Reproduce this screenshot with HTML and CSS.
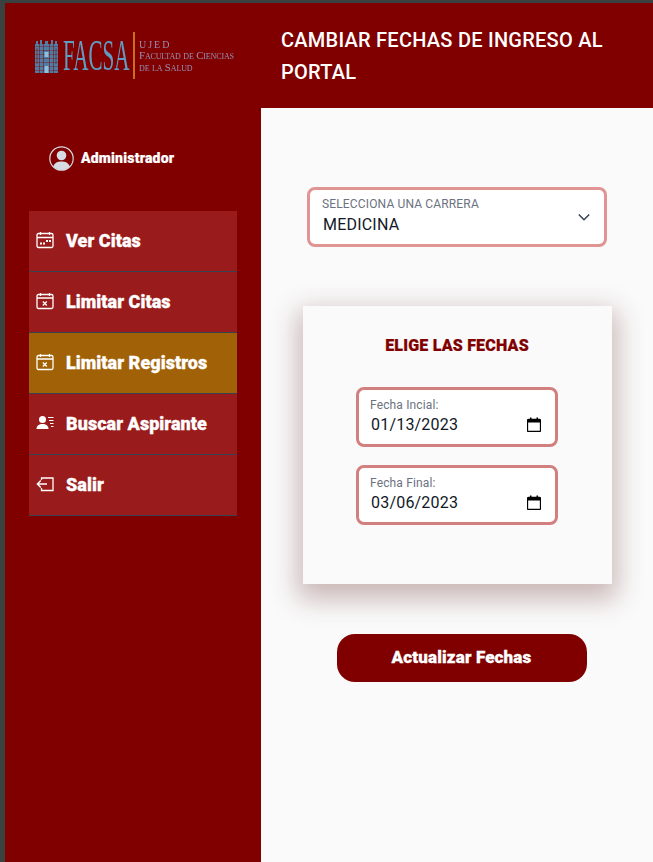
FILE: index.html
```html
<!DOCTYPE html>
<html lang="es">
<head>
<meta charset="utf-8">
<title>Cambiar fechas</title>
<link rel="stylesheet" href="styles.css">
</head>
<body>
<div class="app">
  <aside class="sidebar">
    <div class="logo">
      <svg class="logo-mark" width="23" height="33" viewBox="0 0 23 33">
        <rect x="0" y="4" width="23" height="29" fill="#4f7da3"/>
        <path d="M1 4V1h2v3M5 4V0h2v4M10 4V1h3v3M16 4V0h2v4M20 4V1h2v3" fill="#4f7da3"/>
        <path d="M0 6h23v1H0zM0 10h23v1H0zM0 14h23v1H0zM0 18h23v1H0zM0 22h23v1H0zM0 26h23v1H0zM0 30h23v1H0z" fill="#800000" opacity=".35"/>
        <path d="M4 4h1v29H4zM8 4h1v29H8zM14 4h1v29h-1zM18 4h1v29h-1zM1.500 8h1v16h-1zM20.500 8h1v16h-1z" fill="#800000" opacity=".5"/>
        <path d="M9.500 12h4v5h-4zM9.500 26h4v7h-4z" fill="#8cc0dc"/>
      </svg>
      <span class="logo-name">FACSA</span>
      <span class="logo-bar"></span>
      <div class="logo-text">
        <div class="logo-ujed">UJED</div>
        <div>Facultad de Ciencias</div>
        <div>de la Salud</div>
      </div>
    </div>
    <div class="user">
      <svg width="25" height="25" viewBox="0 0 25 25">
        <circle cx="12.500" cy="12.500" r="11.700" fill="none" stroke="#d7dbe4" stroke-width="1.200"/>
        <circle cx="12.500" cy="9.500" r="4.800" fill="#d7dbe4"/>
        <path d="M4.200 20.500c1.500-3.800 4.500-5 8.300-5s6.800 1.200 8.300 5a11.700 11.700 0 0 1-16.600 0z" fill="#d7dbe4"/>
      </svg>
      <span class="user-name">Administrador</span>
    </div>
    <nav class="menu">
      <a class="item">
        <svg width="18" height="18" viewBox="0 0 18 18" class="ico"><rect x="1" y="2.500" width="16" height="14" rx="1.500" fill="none" stroke="#fff" stroke-width="1.300"/><path d="M4.500 1v3M13.500 1v3M1 6.500h16" stroke="#fff" stroke-width="1.300" fill="none"/><path d="M4 11.500h2v2H4zM7 11.500h2v2H7zM10 9h2v2h-2zM13 9h2v2h-2z" fill="#fff"/></svg>
        <span>Ver Citas</span>
      </a>
      <a class="item">
        <svg width="18" height="18" viewBox="0 0 18 18" class="ico"><rect x="1" y="2.500" width="16" height="14" rx="1.500" fill="none" stroke="#fff" stroke-width="1.300"/><path d="M4.500 1v3M13.500 1v3M1 6h16" stroke="#fff" stroke-width="1.300" fill="none"/><path d="M6.800 9.500l4 4M10.800 9.500l-4 4" stroke="#fff" stroke-width="1.300"/></svg>
        <span>Limitar Citas</span>
      </a>
      <a class="item active">
        <svg width="18" height="18" viewBox="0 0 18 18" class="ico"><rect x="1" y="2.500" width="16" height="14" rx="1.500" fill="none" stroke="#fff" stroke-width="1.300"/><path d="M4.500 1v3M13.500 1v3M1 6h16" stroke="#fff" stroke-width="1.300" fill="none"/><path d="M6.800 9.500l4 4M10.800 9.500l-4 4" stroke="#fff" stroke-width="1.300"/></svg>
        <span>Limitar Registros</span>
      </a>
      <a class="item">
        <svg width="18" height="18" viewBox="0 0 18 18" class="ico"><circle cx="6.500" cy="5.500" r="3.500" fill="#fff"/><path d="M0.500 15c0-3.500 2.500-5 6-5s6 1.500 6 5z" fill="#fff"/><path d="M12 3.500h5.500M13 6.500h4.500M14 9.500h3.500M15 12.500h2.500" stroke="#fff" stroke-width="1.200"/></svg>
        <span>Buscar Aspirante</span>
      </a>
      <a class="item">
        <svg width="18" height="18" viewBox="0 0 18 18" class="ico"><path d="M5.500 5V3h11.500v12.500H5.500V13" fill="none" stroke="#fff" stroke-width="1.300"/><path d="M11 9H1.500M4.800 5.500L1.300 9l3.500 3.500" fill="none" stroke="#fff" stroke-width="1.300"/></svg>
        <span>Salir</span>
      </a>
    </nav>
  </aside>
  <div class="main">
    <header class="topbar">
      <h1>CAMBIAR FECHAS DE INGRESO AL PORTAL</h1>
    </header>
    <main class="content">
      <div class="field field-select">
        <div class="field-body">
          <div class="field-label">SELECCIONA UNA CARRERA</div>
          <div class="field-value">MEDICINA</div>
        </div>
        <svg class="chevron" width="14" height="9" viewBox="0 0 14 9"><path d="M1.800 1.500L7 6.700l5.200-5.200" fill="none" stroke="#374151" stroke-width="1.500"/></svg>
      </div>
      <section class="card">
        <h2>ELIGE LAS FECHAS</h2>
        <div class="field field-date">
          <div class="field-body">
            <div class="field-label">Fecha Incial:</div>
            <div class="field-value">01/13/2023</div>
          </div>
          <svg class="cal" width="14" height="15" viewBox="0 0 14 15"><path d="M1.500 2.500h11a1 1 0 0 1 1 1v10a1 1 0 0 1-1 1h-11a1 1 0 0 1-1-1v-10a1 1 0 0 1 1-1z" fill="none" stroke="#000" stroke-width="1.300"/><path d="M0.500 2.500h13v3h-13zM3 0.500h1.500v2H3zM9.500 0.500H11v2H9.500z" fill="#000"/></svg>
        </div>
        <div class="field field-date">
          <div class="field-body">
            <div class="field-label">Fecha Final:</div>
            <div class="field-value">03/06/2023</div>
          </div>
          <svg class="cal" width="14" height="15" viewBox="0 0 14 15"><path d="M1.500 2.500h11a1 1 0 0 1 1 1v10a1 1 0 0 1-1 1h-11a1 1 0 0 1-1-1v-10a1 1 0 0 1 1-1z" fill="none" stroke="#000" stroke-width="1.300"/><path d="M0.500 2.500h13v3h-13zM3 0.500h1.500v2H3zM9.500 0.500H11v2H9.500z" fill="#000"/></svg>
        </div>
      </section>
      <button class="submit" type="button">Actualizar Fechas</button>
    </main>
  </div>
</div>
</body>
</html>
```

FILE: styles.css
```css
* { box-sizing: border-box; }
html, body { height: 100%; }
body {
  margin: 0;
  padding: 3px 0 0 5px;
  height: 862px;
  overflow: hidden;
  background: #3b4140;
  font-family: Roboto, "Liberation Sans", sans-serif;
}
.app { display: flex; height: 859px; }
.sidebar {
  width: 256px;
  flex: none;
  background: #800000;
  padding: 27px 24px 0;
}
.logo {
  display: flex;
  align-items: center;
  height: 50px;
  margin: 0 -24px 0 6px;
  filter: blur(.3px);
}
.logo-mark { flex: none; margin-top: 2px; }
.logo-name {
  flex: none;
  width: 68px;
  margin-left: 5px;
  font-family: "Liberation Serif", serif;
  font-size: 45px;
  line-height: 1;
  color: #5f9dc4;
  transform: scaleX(.47);
  transform-origin: left center;
}
.logo-bar { flex: none; width: 2px; height: 47px; margin: 0 4px 0 2px; background: #c8701c; }
.logo-text {
  margin-top: 2px;
  font-family: "Liberation Serif", serif;
  font-variant: small-caps;
  font-size: 10.900px;
  letter-spacing: -.15px;
  line-height: 11.500px;
  color: #9690b4;
  white-space: nowrap;
}
.logo-ujed { letter-spacing: 2px; font-size: 10px; }
.user {
  display: flex;
  align-items: center;
  gap: 7px;
  margin: 66px 0 0 20px;
  height: 25px;
  color: #fff;
  font-size: 14px;
  font-weight: 900;
  letter-spacing: .2px;
  -webkit-text-stroke: .2px #fff;
}
.user-name { margin-top: -2px; }
.menu { margin-top: 40px; width: 208px; }
.item {
  display: flex;
  align-items: center;
  height: 61px;
  padding: 0 0 2px 7px;
  gap: 12px;
  background: #991b1b;
  border-bottom: 1px solid #374151;
  color: #fff;
  font-size: 18px;
  font-weight: 900;
  letter-spacing: .05px;
  -webkit-text-stroke: .3px #fff;
}
.item.active { background: #a16207; }
.ico { flex: none; }
.main { flex: 1; display: flex; flex-direction: column; min-width: 0; }
.topbar {
  height: 105px;
  flex: none;
  background: #800000;
  padding: 21px 20px 0;
}
.topbar h1 {
  margin: 0;
  color: #fff;
  font-size: 20px;
  font-weight: 500;
  line-height: 32px;
  letter-spacing: .25px;
}
.content {
  flex: 1;
  background: #fafafa;
  display: flex;
  flex-direction: column;
  align-items: center;
  padding-top: 79px;
}
.field {
  display: flex;
  align-items: center;
  background: #fff;
  border: 3px solid #e09494;
  border-radius: 8px;
  height: 60px;
}
.field-select { width: 300px; padding: 0 13px 0 12px; }
.field-body { flex: 1; align-self: flex-start; padding-top: 7px; }
.field-label {
  font-size: 12px;
  line-height: 14px;
  margin-bottom: 2px;
  color: #6b7280;
  letter-spacing: .15px;
}
.field-value {
  margin-left: 1px;
  font-size: 16px;
  line-height: 24px;
  color: #111827;
  letter-spacing: .2px;
}
.card {
  width: 309px;
  height: 278px;
  margin-top: 59px;
  background: #fafafa;
  box-shadow: 0 10px 25px 5px rgba(100, 40, 40, .32);
  display: flex;
  flex-direction: column;
  align-items: center;
  padding-top: 30px;
}
.card h2 {
  margin: 0 0 31px;
  color: #800000;
  font-size: 16px;
  line-height: 20px;
  font-weight: 900;
  letter-spacing: .2px;
  -webkit-text-stroke: .2px #800000;
}
.field-date {
  width: 202px;
  padding: 0 14px 0 11px;
  border-color: #d27f7f;
  margin-bottom: 18px;
}
.field-date .field-body { padding-top: 8px; }
.field-date .field-label { margin-bottom: 1px; }
.cal { flex: none; margin-top: 15px; }
.submit {
  width: 250px;
  height: 48px;
  margin-top: 50px;
  margin-left: 9px;
  padding: 0 0 2px;
  border: 0;
  border-radius: 18px;
  background: #800000;
  color: #fff;
  font-family: inherit;
  font-size: 17px;
  font-weight: 900;
  letter-spacing: .15px;
  -webkit-text-stroke: .3px #fff;
}
```
